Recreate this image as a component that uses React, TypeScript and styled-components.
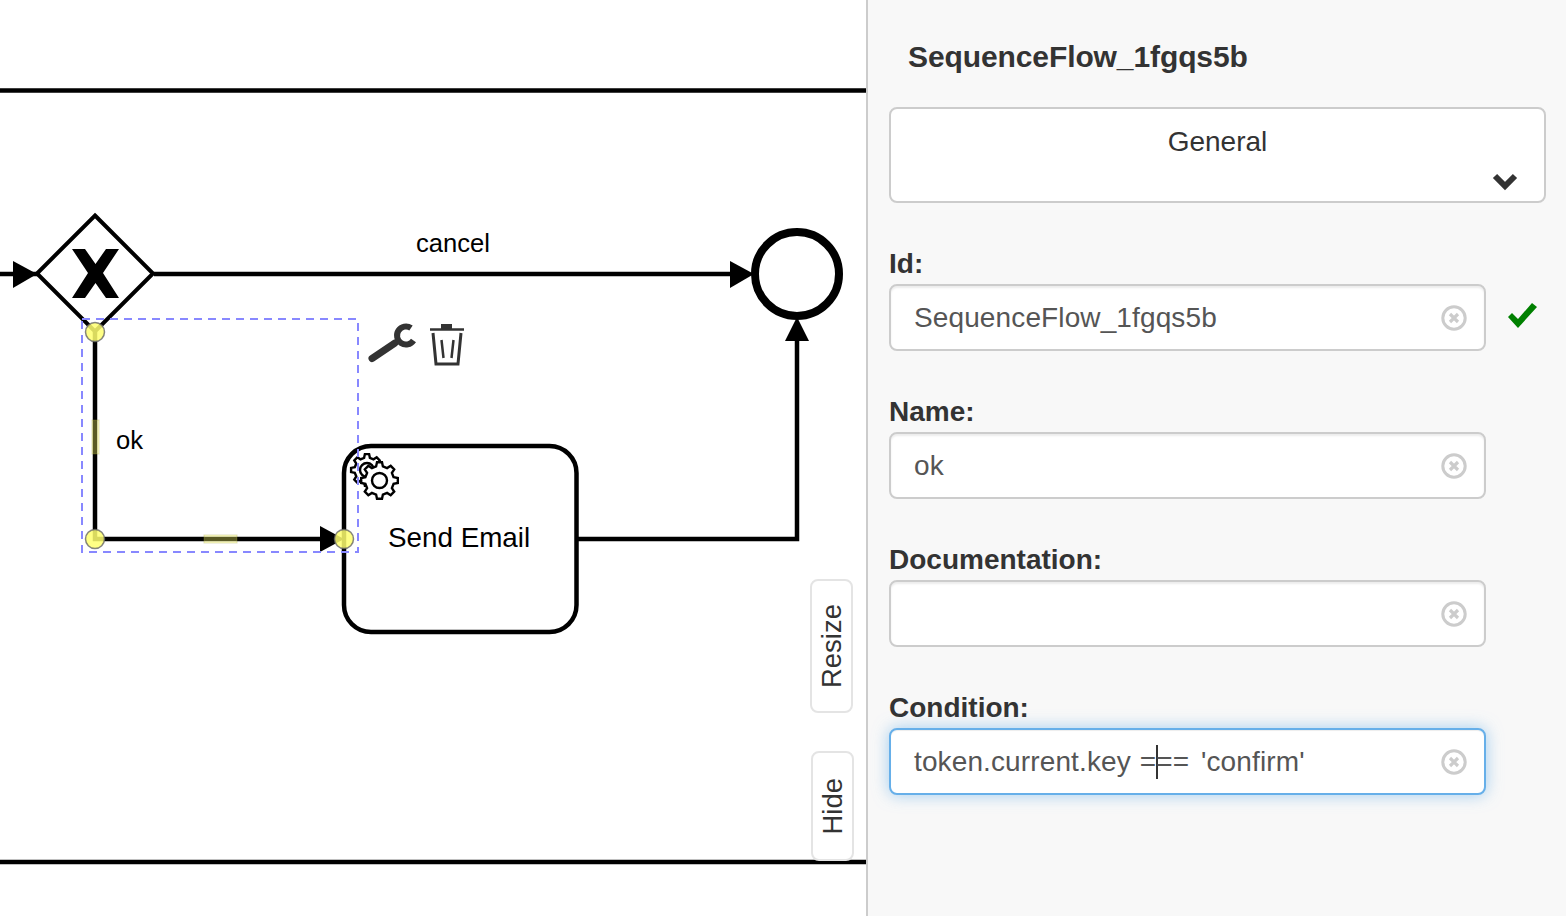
import styled, { createGlobalStyle } from "styled-components";

const GlobalStyle = createGlobalStyle`
  html, body {
    margin: 0;
    height: 100%;
    overflow: hidden;
    background: #fff;
    font-family: "Liberation Sans", Arial, sans-serif;
  }
`;

const Layout = styled.div`
  display: flex;
  height: 916px;
  width: 1566px;
`;

const Canvas = styled.main`
  position: relative;
  flex: 1;
  background: #fff;
  overflow: hidden;
`;

const DiagramSvg = styled.svg`
  display: block;
  width: 100%;
  height: 100%;
`;

const DiagramLabel = styled.text<{ $size?: number }>`
  font-family: "Liberation Sans", Arial, sans-serif;
  font-size: ${(p) => p.$size ?? 25.6}px;
  fill: #000;
`;

const SideTab = styled.button<{ $top: number; $left: number; $height: number }>`
  position: absolute;
  top: ${(p) => p.$top}px;
  left: ${(p) => p.$left}px;
  width: 43px;
  height: ${(p) => p.$height}px;
  padding: 0;
  display: flex;
  align-items: center;
  justify-content: center;
  background: #fff;
  border: 2px solid #e4e4e4;
  border-radius: 8px;
  color: #333;
  font-family: inherit;
  font-size: 27.5px;
`;

const SideTabText = styled.span`
  writing-mode: vertical-rl;
  transform: rotate(180deg);
  line-height: 32px;
`;

const Panel = styled.aside`
  box-sizing: border-box;
  width: 700px;
  height: 100%;
  padding: 40px 20px 0 21px;
  background: #f8f8f8;
  border-left: 2px solid #ccc;
  color: #333;
`;

const PanelTitle = styled.h2`
  margin: 0 0 33px 19px;
  font-size: 30px;
  line-height: 34px;
  font-weight: 700;
  letter-spacing: -0.1px;
`;

const GroupSelect = styled.div`
  box-sizing: border-box;
  height: 96px;
  display: flex;
  flex-direction: column;
  padding: 17px 26px 0;
  background: #fff;
  border: 2px solid #ccc;
  border-radius: 8px;
  font-size: 28px;
  line-height: 32px;
  text-align: center;
`;

const Chevron = styled.svg`
  align-self: flex-end;
  margin-top: 15px;
  width: 26px;
  height: 18px;
`;

const Field = styled.section`
  margin-top: 45px;
`;

const FieldLabel = styled.label`
  display: block;
  margin-bottom: 4px;
  font-size: 28px;
  line-height: 32px;
  font-weight: 700;
`;

const FieldRow = styled.div`
  display: flex;
  align-items: center;
`;

const TextInput = styled.div<{ $focused?: boolean }>`
  box-sizing: border-box;
  flex: none;
  width: 597px;
  height: 67px;
  display: flex;
  align-items: center;
  justify-content: space-between;
  padding: 0 17px 0 23px;
  background: #fff;
  border: 2px solid ${(p) => (p.$focused ? "#66afe9" : "#ccc")};
  border-radius: 8px;
  box-shadow: ${(p) =>
    p.$focused
      ? "inset 0 1px 1px rgba(0,0,0,.075), 0 0 16px rgba(102,175,233,.6)"
      : "inset 0 2px 2px rgba(0,0,0,.075)"};
  color: #555;
  font-size: 28px;
  letter-spacing: 0.12px;
  word-spacing: 1px;
  white-space: pre;
`;

const Caret = styled.span`
  display: inline-block;
  width: 0;
  height: 34px;
  vertical-align: -8px;
  border-left: 2px solid #333;
  margin-right: -2px;
`;

const AfterOperator = styled.span`
  margin-left: 3px;
`;

const ClearIcon = styled.svg`
  flex: none;
  width: 26px;
  height: 26px;
`;

const ValidIcon = styled.svg`
  flex: none;
  width: 32px;
  height: 27px;
  margin: -5px 0 0 20px;
`;

function gearPath(cx: number, cy: number, outer: number, inner: number, teeth: number) {
  const step = (Math.PI * 2) / teeth;
  const pts: string[] = [];
  for (let i = 0; i < teeth; i++) {
    const a = i * step;
    const corners: [number, number][] = [
      [inner, a - step * 0.3],
      [outer, a - step * 0.17],
      [outer, a + step * 0.17],
      [inner, a + step * 0.3],
    ];
    corners.forEach(([r, t]) => {
      pts.push(`${(cx + r * Math.cos(t)).toFixed(1)} ${(cy + r * Math.sin(t)).toFixed(1)}`);
    });
  }
  return `M${pts.join("L")}Z`;
}

function Diagram() {
  return (
    <DiagramSvg viewBox="0 0 866 916">
      <g stroke="#000" strokeWidth="4.5" fill="none">
        <path d="M0 90.5H866M0 862H866" />
        <path d="M0 274H38" />
        <path d="M95 215.5L153 273.5L95 331.5L37 273.5Z" fill="#fff" strokeWidth="4" />
        <path d="M154 274H732" />
        <circle cx="797" cy="274" r="42" strokeWidth="8" />
        <path d="M578 539H797V336" />
        <rect x="344" y="446" width="232.5" height="186" rx="27" fill="#fff" />
        <path d="M95 332V539H328" />
      </g>

      <g fill="#000">
        <path d="M13 261L37 274L13 288Z" />
        <path d="M730 261L754 274L730 288Z" />
        <path d="M785 341L797 317L809 341Z" />
        <path d="M320 526L344 539L320 552Z" />
        <path d="M72 249H85L95.5 264L106 249H119L103 273L119 298H106L95.5 283L85 298H72L88 273Z" />
      </g>

      <DiagramLabel x="416" y="252">cancel</DiagramLabel>
      <DiagramLabel x="116" y="449">ok</DiagramLabel>
      <DiagramLabel x="388" y="547" $size={27.8}>Send Email</DiagramLabel>

      <g stroke="#000" strokeWidth="2.4" fill="#fff">
        <path d={gearPath(367, 470, 16, 12.5, 8)} />
        <circle cx="367" cy="470" r="7" />
        <path d={gearPath(379.5, 480.5, 18.5, 14.5, 8)} />
        <circle cx="379.5" cy="480.5" r="7.5" />
      </g>

      <rect x="82" y="319" width="276" height="233" fill="none" stroke="#8888ff" strokeWidth="2" strokeDasharray="8 6" />

      <g fill="#ffff66" fillOpacity="0.35" stroke="#999933" strokeOpacity="0.3">
        <rect x="92" y="420" width="7" height="34" />
        <rect x="204" y="535" width="33" height="8" />
      </g>
      <g fill="#ffff70" fillOpacity="0.85" stroke="#666" strokeOpacity="0.8" strokeWidth="1.5">
        <circle cx="95" cy="332" r="9.5" />
        <circle cx="95" cy="539" r="9.5" />
        <circle cx="344" cy="539" r="9.5" />
      </g>

      <g stroke="#333" fill="none">
        <path d="M372 358.5L395 343" strokeWidth="7" strokeLinecap="round" />
        <path d="M411 328A9 9 0 1 0 413.5 340.5" strokeWidth="6" />
        <path d="M441 326.5H452" strokeWidth="5" />
        <path d="M430 329.5H464" strokeWidth="2.5" />
        <path d="M433 333L436 364H458L461 333" strokeWidth="3" />
        <path d="M441.5 340L443.5 358M453.5 340L451.5 358" strokeWidth="2.5" />
      </g>
    </DiagramSvg>
  );
}

function Clear() {
  return (
    <ClearIcon viewBox="0 0 26 26">
      <circle cx="13" cy="13" r="11.2" fill="none" stroke="#ccc" strokeWidth="3" />
      <path d="M9 9L17 17M17 9L9 17" stroke="#ccc" strokeWidth="3.2" />
    </ClearIcon>
  );
}

const fields = [
  { label: "Name:", value: "ok" },
  { label: "Documentation:", value: "" },
];

export default function App() {
  return (
    <Layout>
      <GlobalStyle />
      <Canvas>
        <Diagram />
        <SideTab $top={579} $left={810} $height={134}>
          <SideTabText>Resize</SideTabText>
        </SideTab>
        <SideTab $top={751} $left={811} $height={110}>
          <SideTabText>Hide</SideTabText>
        </SideTab>
      </Canvas>

      <Panel>
        <PanelTitle>SequenceFlow_1fgqs5b</PanelTitle>
        <GroupSelect>
          General
          <Chevron viewBox="0 0 26 18">
            <path d="M3 3L13 13L23 3" fill="none" stroke="#333" strokeWidth="6" />
          </Chevron>
        </GroupSelect>

        <Field>
          <FieldLabel>Id:</FieldLabel>
          <FieldRow>
            <TextInput>
              SequenceFlow_1fgqs5b
              <Clear />
            </TextInput>
            <ValidIcon viewBox="0 0 32 27">
              <path d="M2 15L6 11L12 17L26 1L31 5L12 26Z" fill="#008000" />
            </ValidIcon>
          </FieldRow>
        </Field>

        {fields.map((f) => (
          <Field key={f.label}>
            <FieldLabel>{f.label}</FieldLabel>
            <FieldRow>
              <TextInput>
                <span>{f.value}</span>
                <Clear />
              </TextInput>
            </FieldRow>
          </Field>
        ))}

        <Field>
          <FieldLabel>Condition:</FieldLabel>
          <FieldRow>
            <TextInput $focused>
              <span>
                token.current.key =<Caret />== <AfterOperator>'confirm'</AfterOperator>
              </span>
              <Clear />
            </TextInput>
          </FieldRow>
        </Field>
      </Panel>
    </Layout>
  );
}
